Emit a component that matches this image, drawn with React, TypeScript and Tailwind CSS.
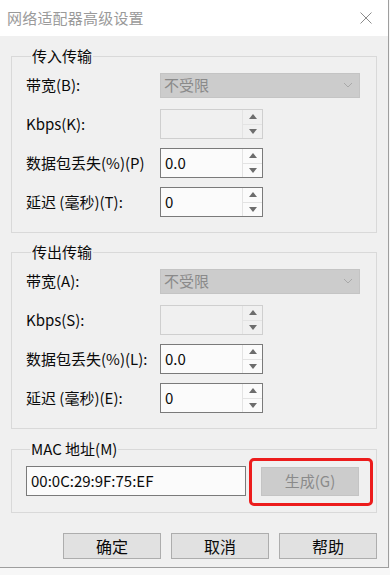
import React from "react";

const FONT = { fontFamily: '"Noto Sans CJK SC", "Noto Sans", sans-serif' };

function SpinArrows() {
  return (
    <div className="flex flex-col w-[20px] h-full border-l border-[#e3e3e3]">
      <div className="flex-1 flex items-center justify-center border-b border-[#e3e3e3]">
        <svg width="8" height="5" viewBox="0 0 8 5">
          <polygon points="4,0 8,5 0,5" fill="#6d6d6d" />
        </svg>
      </div>
      <div className="flex-1 flex items-center justify-center">
        <svg width="8" height="5" viewBox="0 0 8 5">
          <polygon points="0,0 8,0 4,5" fill="#6d6d6d" />
        </svg>
      </div>
    </div>
  );
}

function SpinBox({ value, disabled }: { value?: string; disabled?: boolean }) {
  return (
    <div
      className={
        "w-[103px] h-[30px] flex border " +
        (disabled ? "border-[#cfcfcf] bg-[#f0f0f0]" : "border-[#7a7a7a] bg-[#fbfbfb]")
      }
    >
      <div className="flex-1 flex items-center pl-[4px] text-[15px] text-[#0a0a0a]">{value}</div>
      <SpinArrows />
    </div>
  );
}

function Select() {
  return (
    <div className="w-[200px] h-[25px] bg-[#cccccc] border border-[#c4c4c4] flex items-center justify-between pl-[3px] pr-[6px]">
      <span className="text-[15px] text-[#8a8a8a]">不受限</span>
      <svg width="10" height="6" viewBox="0 0 10 6">
        <polyline points="1,1 5,5 9,1" fill="none" stroke="#a9a9a9" strokeWidth="1" />
      </svg>
    </div>
  );
}

function Row({ label, children }: { label: string; children: React.ReactNode }) {
  return (
    <div className="flex items-center h-[30px]">
      <div className="w-[134px] text-[15px] text-[#0a0a0a] whitespace-nowrap">{label}</div>
      {children}
    </div>
  );
}

function Group({
  title,
  rows,
}: {
  title: string;
  rows: { label: string; node: React.ReactNode }[];
}) {
  return (
    <fieldset className="border border-[#d9d9d9] mx-[11px] w-[366px] pl-[14px] pt-[4px] pb-[15px]">
      <legend className="ml-[5px] px-[1px] text-[15px] leading-[20px] text-[#0a0a0a]">{title}</legend>
      <div className="flex flex-col gap-[9px]">
        {rows.map((r) => (
          <Row key={r.label} label={r.label}>
            {r.node}
          </Row>
        ))}
      </div>
    </fieldset>
  );
}

export default function App() {
  return (
    <div className="w-[390px] h-[575px] bg-[#f7f7f7] overflow-hidden" style={FONT}>
      <div className="w-[389px] h-[568px] bg-[#f0f0f0] border-r border-b border-[#9e9e9e] flex flex-col">
        <div className="h-[36px] bg-white flex items-center justify-between pl-[7px] pr-[16px] shrink-0">
          <span className="text-[15px] text-[#9a9a9a] tracking-[0.2px]">网络适配器高级设置</span>
          <svg width="12" height="12" viewBox="0 0 12 12">
            <line x1="0.5" y1="0.5" x2="11.5" y2="11.5" stroke="#8c8c8c" strokeWidth="1" />
            <line x1="11.5" y1="0.5" x2="0.5" y2="11.5" stroke="#8c8c8c" strokeWidth="1" />
          </svg>
        </div>
        <div className="flex flex-col pt-[10px]">
          <Group
            title="传入传输"
            rows={[
              { label: "带宽(B):", node: <Select /> },
              { label: "Kbps(K):", node: <SpinBox disabled /> },
              { label: "数据包丢失(%)(P)", node: <SpinBox value="0.0" /> },
              { label: "延迟 (毫秒)(T):", node: <SpinBox value="0" /> },
            ]}
          />
          <div className="h-[9px]" />
          <Group
            title="传出传输"
            rows={[
              { label: "带宽(A):", node: <Select /> },
              { label: "Kbps(S):", node: <SpinBox disabled /> },
              { label: "数据包丢失(%)(L):", node: <SpinBox value="0.0" /> },
              { label: "延迟 (毫秒)(E):", node: <SpinBox value="0" /> },
            ]}
          />
          <div className="h-[10px]" />
          <fieldset className="border border-[#d9d9d9] mx-[11px] w-[366px] pl-[14px] pt-[7px] pb-[16px]">
            <legend className="ml-[4px] px-[1px] text-[15px] leading-[20px] text-[#0a0a0a]">MAC 地址(M)</legend>
            <div className="flex items-center">
              <div className="w-[220px] h-[30px] border border-[#7a7a7a] bg-[#fbfbfb] flex items-center pl-[4px] text-[15px] text-[#0a0a0a]">
                00:0C:29:9F:75:EF
              </div>
              <div className="relative ml-[15px]">
                <div className="w-[98px] h-[29px] bg-[#cccccc] border border-[#c4c4c4] flex items-center justify-center text-[15px] text-[#8a8a8a]">
                  生成(G)
                </div>
                <div className="absolute left-[-12px] right-[-14px] top-[-9px] bottom-[-10px] border-[3px] border-[#ec1c1c] rounded-[5px]" />
              </div>
            </div>
          </fieldset>
          <div className="flex justify-end gap-[10px] pr-[11px] mt-[20px]">
            {["确定", "取消", "帮助"].map((t) => (
              <div
                key={t}
                className="w-[98px] h-[26px] bg-[#e1e1e1] border border-[#adadad] flex items-center justify-center text-[16px] text-[#0a0a0a]"
              >
                {t}
              </div>
            ))}
          </div>
        </div>
      </div>
    </div>
  );
}
